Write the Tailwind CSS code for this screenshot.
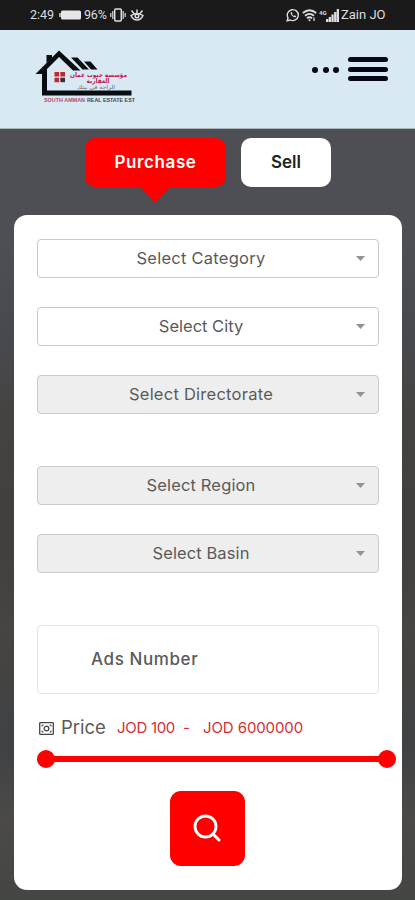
<!DOCTYPE html>
<html lang="en">
<head>
<meta charset="utf-8">
<meta name="viewport" content="width=device-width, initial-scale=1">
<title>Property search</title>
<script src="https://cdn.jsdelivr.net/npm/@tailwindcss/browser@4"></script>
</head>
<body class="w-[415px] h-[900px] overflow-hidden flex flex-col font-[Inter,sans-serif] text-[#5a5a5a] bg-[linear-gradient(180deg,#4d4f54_0%,#4d4f54_27%,#48494f_38%,#45423f_47%,#41403e_60%,#474441_70%,#3f4244_83%,#4b4a46_91%,#444643_100%)]">

<!-- Status bar -->
<div class="h-[30px] shrink-0 bg-[#1a1a1a] flex items-center pl-[30px] pr-[29px] text-[#dedede] text-[12.5px] font-[Roboto,sans-serif]">
  <span class="w-[29px] whitespace-nowrap">2:49</span>
  <svg class="w-[22px] h-[10px] shrink-0" viewBox="0 0 22 10"><rect x="2" y="0.5" width="20" height="9" rx="1.5" fill="#e6e6e6"/><rect x="0" y="3" width="2" height="4" fill="#aaa"/></svg>
  <span class="ml-[3px] w-[26px] tracking-[-0.2px] whitespace-nowrap">96%</span>
  <svg class="w-[16px] h-[14px] shrink-0" viewBox="0 0 16 14" fill="none" stroke="#ddd" stroke-width="1.5"><rect x="4.7" y="1" width="6.6" height="12" rx="1"/><path d="M2.8 3v8M.8 5v4M13.2 3v8M15.2 5v4" stroke-width="1.2"/></svg>
  <svg class="ml-[4px] w-[14px] h-[14px] shrink-0" viewBox="0 0 14 14" fill="none" stroke="#ddd" stroke-width="1.5"><path d="M1 7.500Q7 3.500 13 7.500Q11 12 7 12Q3 12 1 7.500ZM1.500 2.500 4 5.500M12.500 2.500 10 5.500M7 1.500V5"/><circle cx="7" cy="8" r="1.800"/></svg>
  <svg class="ml-auto w-[14px] h-[14px] shrink-0" viewBox="0 0 14 14" fill="none" stroke="#ddd" stroke-width="1.4"><path d="M1.2 12.8 2 9.8A5.5 5.5 0 1 1 4.3 12Z"/><path d="M4.8 4.2C4 6.5 7.5 10 9.8 9.2L10 8 8.5 7.3 7.6 8 6 6.2 6.5 5.5 5.8 4Z" fill="#ddd" stroke="none"/></svg>
  <svg class="ml-[2px] w-[15px] h-[13px] shrink-0" viewBox="0 0 15 13" fill="none" stroke="#ddd" stroke-width="1.8"><path d="M.8 4Q7.5-1.5 14.2 4M3 6.8Q7.5 3 12 6.8M5 9.3Q7.5 7.2 10 9.3"/><circle cx="7.5" cy="11.3" r="1" fill="#ddd" stroke="none"/><path d="M12 8.5v3.5" stroke-width="1.3"/></svg>
  <span class="ml-[2px] w-[8px] h-[13px] text-[6px] leading-[7px] font-bold">4G</span>
  <svg class="w-[13px] h-[13px] shrink-0 -ml-px" viewBox="0 0 13 13" fill="#ddd"><path d="M0 10h2.300v3H0zM2.700 8h2.300v5h-2.300zM5.400 5.500h2.300V13h-2.300zM8.100 3h2.300v10h-2.300zM10.700 0h2.300v13h-2.300z"/></svg>
  <span class="ml-[2px] w-[45px] text-[13px] whitespace-nowrap">Zain JO</span>
</div>

<!-- Header -->
<header class="h-[99px] shrink-0 bg-[#d9e9f3] border-b border-[#a9b6be] flex pl-[35px] pr-[27px]">
  <svg class="mt-[19px] w-[102px] h-[56px] shrink-0 overflow-visible" viewBox="35 49 102 56">
    <g fill="#080d12">
      <path d="M35.5 74 59 50.5 80.5 70.5H73L59 57 47 69V90.5H131.5V95.5H42V74Z"/>
      <path d="M46.5 55H52V58L46.5 63Z"/>
      <path d="M71 57.5H77.5L89 69.5H82.500Z"/>
      <path d="M84 61.500H90.500L97.500 69.500H91Z"/>
    </g>
    <path d="M54.500 72h4.500v4.500h-4.500zM60.300 72h4.700v4.500h-4.700zM54.500 77.700h4.500v4.500h-4.500z" fill="#c12632"/>
    <path d="M60.300 77.700h4.700v4.500h-4.700z" fill="#333"/>
    <g font-family="DejaVu Sans, sans-serif" text-anchor="middle" direction="rtl">
      <text x="98.500" y="76.500" font-size="6.500" font-weight="bold" fill="#bd1a50" textLength="57" lengthAdjust="spacingAndGlyphs">مؤسسة جنوب عمان</text>
      <text x="98" y="83" font-size="6.500" font-weight="bold" fill="#bd1a50" textLength="23" lengthAdjust="spacingAndGlyphs">العقارية</text>
      <text x="96" y="89" font-size="5.500" fill="#666" textLength="38" lengthAdjust="spacingAndGlyphs">الراحة في بيتك</text>
    </g>
    <g font-family="Liberation Sans, sans-serif" font-size="4.500" font-weight="bold">
      <text x="44" y="102" fill="#b44a69" textLength="41" lengthAdjust="spacingAndGlyphs">SOUTH AMMAN</text>
      <text x="87" y="102" fill="#3b4550" textLength="48" lengthAdjust="spacingAndGlyphs">REAL ESTATE EST</text>
    </g>
  </svg>
  <div class="ml-auto mt-[37px] flex gap-[4.500px] w-[27px] h-[6px]">
    <i class="size-[6px] rounded-full bg-[#060716]"></i><i class="size-[6px] rounded-full bg-[#060716]"></i><i class="size-[6px] rounded-full bg-[#060716]"></i>
  </div>
  <div class="ml-[9px] mt-[27px] w-[40px] flex flex-col gap-[4.500px]">
    <i class="h-[5px] rounded-full bg-[#060716]"></i><i class="h-[5px] rounded-full bg-[#060716]"></i><i class="h-[5px] rounded-full bg-[#060716]"></i>
  </div>
</header>

<main class="flex flex-col px-[14px]">
  <!-- Tabs -->
  <div class="mt-[9px] ml-[71px] flex gap-[15px] h-[77px] text-[17px] font-semibold">
    <div class="w-[141px] flex flex-col">
      <button class="h-[49px] shrink-0 rounded-[10px] bg-[#fe0000] text-white tracking-[0.6px]">Purchase</button>
      <svg class="ml-[54px] -mt-px w-[32px] h-[18px]" viewBox="0 0 32 18"><path d="M0 0H32L16 17Z" fill="#fe0000"/></svg>
    </div>
    <button class="w-[90px] h-[49px] rounded-[10px] bg-white text-[#222]">Sell</button>
  </div>

  <!-- Search form -->
  <section class="w-[388px] h-[675px] rounded-[13px] bg-white px-[23px] pt-[24px] flex flex-col text-[16.5px] tracking-[0.25px]">
    <div class="flex flex-col gap-[29px] w-[342px]">
      <div class="h-[39px] rounded-[4px] border border-[#cacaca] bg-white flex items-center pr-[13px]"><span class="flex-1 text-center pl-[13px] pr-[5px]">Select Category</span><svg class="w-[9px] h-[5px]" viewBox="0 0 9 5"><path d="M0 0H9L4.500 5Z" fill="#929292"/></svg></div>
      <div class="h-[39px] rounded-[4px] border border-[#cacaca] bg-white flex items-center pr-[13px]"><span class="flex-1 text-center pl-[13px] pr-[5px] tracking-[0px]">Select City</span><svg class="w-[9px] h-[5px]" viewBox="0 0 9 5"><path d="M0 0H9L4.500 5Z" fill="#929292"/></svg></div>
      <div class="h-[39px] rounded-[4px] border border-[#cacaca] bg-[#eeeeee] flex items-center pr-[13px]"><span class="flex-1 text-center pl-[13px] pr-[5px]">Select Directorate</span><svg class="w-[9px] h-[5px]" viewBox="0 0 9 5"><path d="M0 0H9L4.500 5Z" fill="#929292"/></svg></div>
    </div>
    <div class="mt-[52px] flex flex-col gap-[29px] w-[342px]">
      <div class="h-[39px] rounded-[4px] border border-[#cacaca] bg-[#eeeeee] flex items-center pr-[13px]"><span class="flex-1 text-center pl-[13px] pr-[5px] tracking-[0.15px]">Select Region</span><svg class="w-[9px] h-[5px]" viewBox="0 0 9 5"><path d="M0 0H9L4.500 5Z" fill="#929292"/></svg></div>
      <div class="h-[39px] rounded-[4px] border border-[#cacaca] bg-[#eeeeee] flex items-center pr-[13px]"><span class="flex-1 text-center pl-[13px] pr-[5px] tracking-[0.1px]">Select Basin</span><svg class="w-[9px] h-[5px]" viewBox="0 0 9 5"><path d="M0 0H9L4.500 5Z" fill="#929292"/></svg></div>
    </div>
    <div class="mt-[52px] w-[342px] h-[69px] shrink-0 rounded-[4px] border border-[#e4e4e4] flex items-center pl-[53px] font-medium text-[#5a5a5a] text-[17px] tracking-[0.6px]">Ads Number</div>

    <div class="mt-[22px] h-[24px] shrink-0 flex items-center whitespace-nowrap tracking-normal">
      <svg class="ml-[2px] w-[15px] h-[13px] shrink-0" viewBox="0 0 15 13" fill="none" stroke="#454545" stroke-width="1.300"><rect x=".7" y=".7" width="13.600" height="11.600" rx=".5"/><circle cx="7.500" cy="6.500" r="2.300"/><path d="M3 4.500V3H4.500M10.500 3H12V4.500M12 8.500V10H10.500M4.500 10H3V8.500" stroke-width="1"/></svg>
      <span class="ml-[7px] w-[56px] text-[18.5px]">Price</span>
      <span class="w-[66px] text-[15px] text-[#d32f33] tracking-[-0.3px]">JOD 100</span>
      <span class="w-[20px] text-[15px] text-[#d32f33]">-</span>
      <span class="text-[15px] text-[#d32f33] tracking-[-0.1px]">JOD 6000000</span>
    </div>
    <div class="mt-[10px] w-[359px] h-[18px] shrink-0 flex items-center">
      <i class="size-[18px] rounded-full bg-[#fe0000] shrink-0"></i>
      <i class="flex-1 h-[6px] -mx-[2px] bg-[#fe0000]"></i>
      <i class="size-[18px] rounded-full bg-[#fe0000] shrink-0"></i>
    </div>
    <button aria-label="Search" class="mt-[23px] ml-[133px] size-[75px] shrink-0 rounded-[11px] bg-[#fe0000] flex items-center justify-center">
      <svg class="w-[28px] h-[28px] -translate-x-px -translate-y-px" viewBox="0 0 28 28" fill="none" stroke="white" stroke-width="2.900" stroke-linecap="round"><circle cx="12.500" cy="12.500" r="10.500"/><path d="M20 20 26 26"/></svg>
    </button>
  </section>
</main>
</body>
</html>
